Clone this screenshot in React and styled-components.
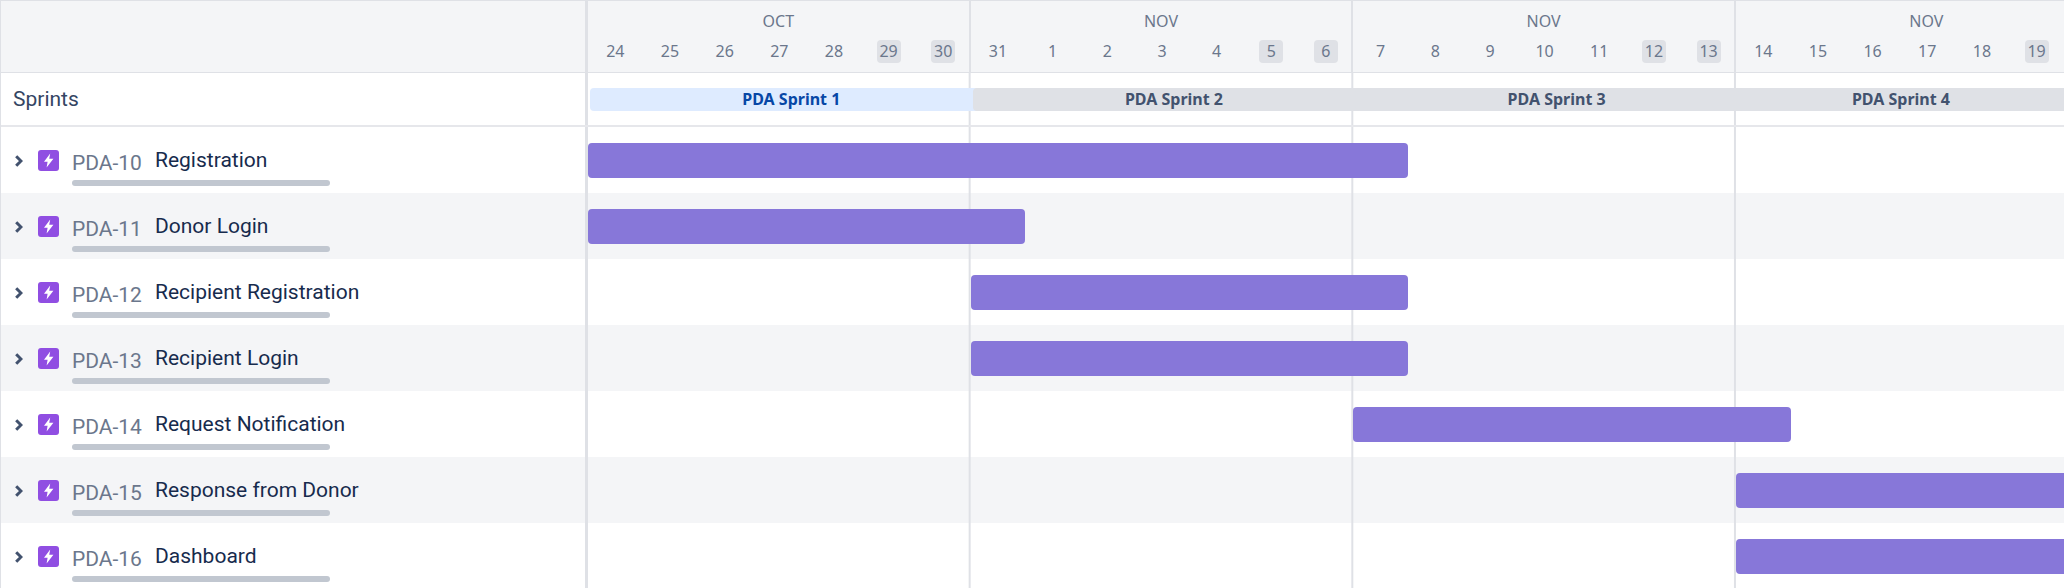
import React from 'react'
import styled, { createGlobalStyle } from 'styled-components'

const DAY = 54.6667
const WEEK = DAY * 7
const LINE = '#dfe1e6'

const months = [
  { name: 'OCT', days: [24, 25, 26, 27, 28, 29, 30] },
  { name: 'NOV', days: [31, 1, 2, 3, 4, 5, 6] },
  { name: 'NOV', days: [7, 8, 9, 10, 11, 12, 13] },
  { name: 'NOV', days: [14, 15, 16, 17, 18, 19] },
]

const sprints = ['PDA Sprint 1', 'PDA Sprint 2', 'PDA Sprint 3', 'PDA Sprint 4']

const issues = [
  { id: 'PDA-10', title: 'Registration', start: 0, days: 15 },
  { id: 'PDA-11', title: 'Donor Login', start: 0, days: 8 },
  { id: 'PDA-12', title: 'Recipient Registration', start: 7, days: 8 },
  { id: 'PDA-13', title: 'Recipient Login', start: 7, days: 8 },
  { id: 'PDA-14', title: 'Request Notification', start: 14, days: 8 },
  { id: 'PDA-15', title: 'Response from Donor', start: 21, days: 10 },
  { id: 'PDA-16', title: 'Dashboard', start: 21, days: 10 },
]

const Chevron = () => (
  <ChevronIcon viewBox="0 0 8 12" aria-hidden="true">
    <path d="M1.2 1.2 L6 6 L1.2 10.8" fill="none" stroke="#42526e" strokeWidth="3" />
  </ChevronIcon>
)

const EpicIcon = () => (
  <EpicBox>
    <svg viewBox="0 0 21 21" width="21" height="21" aria-hidden="true">
      <path d="M12.2 3.6 L6 11.8 H9.6 L8.6 17.4 L15.4 8.8 H11.2 Z" fill="#fff" />
    </svg>
  </EpicBox>
)

const App = () => {
  return (
    <Page>
      <GlobalStyle />
      <HeaderRow>
        <LeftCell />
        <Months>
          {months.map((month, i) => (
            <Month key={i}>
              <MonthName>{month.name}</MonthName>
              <Days>
                {month.days.map((day, d) => (
                  <Day key={day}>
                    <DayNumber $weekend={d > 4}>{day}</DayNumber>
                  </Day>
                ))}
              </Days>
            </Month>
          ))}
        </Months>
      </HeaderRow>

      <SprintRow>
        <SprintLabel>Sprints</SprintLabel>
        <SprintTrack>
          {sprints.map((sprint, i) => (
            <SprintPill key={sprint} $active={i === 0} $last={i === sprints.length - 1}>
              {sprint}
            </SprintPill>
          ))}
        </SprintTrack>
      </SprintRow>

      {issues.map((issue, i) => (
        <IssueRow key={issue.id} $striped={i % 2 === 1}>
          <IssueCell>
            <Chevron />
            <EpicIcon />
            <IssueBody>
              <IssueText>
                <IssueKey>{issue.id}</IssueKey>
                <IssueTitle>{issue.title}</IssueTitle>
              </IssueText>
              <Progress />
            </IssueBody>
          </IssueCell>
          <Track>
            <Bar $start={issue.start} $days={issue.days} />
          </Track>
        </IssueRow>
      ))}
    </Page>
  )
}

const GlobalStyle = createGlobalStyle`
  html, body {
    margin: 0;
    padding: 0;
    background: #fff;
  }
  * {
    box-sizing: border-box;
  }
`

const Page = styled.div`
  width: 2064px;
  height: 588px;
  overflow: hidden;
  border-top: 1px solid ${LINE};
  border-left: 1px solid ${LINE};
  font-family: Roboto, "Liberation Sans", sans-serif;
`

const HeaderRow = styled.div`
  display: grid;
  grid-template-columns: 587px 1fr;
  height: 72px;
  background: #f4f5f7;
  border-bottom: 1px solid ${LINE};
`

const LeftCell = styled.div`
  border-right: 3px solid ${LINE};
`

const Months = styled.div`
  display: flex;
  min-width: 0;
  overflow: hidden;
`

const Month = styled.div`
  flex: 0 0 ${WEEK}px;
  min-width: 0;
  height: 71px;
  border-right: 2px solid ${LINE};
`

const MonthName = styled.div`
  height: 31px;
  padding-top: 11px;
  text-align: center;
  font-family: "Noto Sans", sans-serif;
  font-size: 16px;
  line-height: 18px;
  color: #6b778c;
`

const Days = styled.div`
  display: flex;
  padding-top: 8px;
`

const Day = styled.div`
  flex: 0 0 ${DAY}px;
  display: flex;
  justify-content: center;
`

const DayNumber = styled.span`
  width: 24px;
  height: 23px;
  border-radius: 4px;
  background: ${(p) => (p.$weekend ? LINE : 'transparent')};
  text-align: center;
  font-family: "Noto Sans", sans-serif;
  font-size: 16px;
  line-height: 23px;
  color: #6b778c;
`

const weekLines = `
  background-image: linear-gradient(to right, transparent ${WEEK - 2}px, ${LINE} ${WEEK - 2}px);
  background-size: ${WEEK}px 100%;
`

const SprintRow = styled.div`
  display: grid;
  grid-template-columns: 587px 1fr;
  height: 54px;
  border-bottom: 2px solid #e6e7eb;
`

const SprintLabel = styled.div`
  display: flex;
  align-items: center;
  padding-left: 12px;
  border-right: 3px solid ${LINE};
  font-size: 21px;
  color: #344563;
`

const SprintTrack = styled.div`
  display: flex;
  min-width: 0;
  padding: 15px 0 0 2px;
  overflow: hidden;
  ${weekLines}
`

const SprintPill = styled.div`
  flex: ${(p) => (p.$last ? '1 0 0' : `0 0 ${WEEK + 20}px`)};
  height: 23px;
  margin-right: ${(p) => (p.$last ? '0' : '-20px')};
  border-radius: ${(p) => (p.$last ? '4px 0 0 4px' : '4px')};
  background: ${(p) => (p.$active ? '#deebff' : LINE)};
  color: ${(p) => (p.$active ? '#0747a6' : '#42526e')};
  text-align: center;
  font-family: "Noto Sans", sans-serif;
  font-size: 16px;
  font-weight: 700;
  line-height: 23px;
`

const IssueRow = styled.div`
  display: grid;
  grid-template-columns: 587px 1fr;
  height: 66px;
  background: ${(p) => (p.$striped ? '#f4f5f7' : '#fff')};
`

const IssueCell = styled.div`
  display: flex;
  align-items: flex-start;
  padding: 22px 0 0 14px;
  border-right: 3px solid ${LINE};
`

const ChevronIcon = styled.svg`
  flex: none;
  width: 8px;
  height: 12px;
  margin-top: 6px;
`

const EpicBox = styled.div`
  flex: none;
  width: 21px;
  height: 21px;
  margin: 1px 0 0 15px;
  border-radius: 3px;
  background: #904ee2;
`

const IssueBody = styled.div`
  width: 258px;
  margin-left: 13px;
`

const IssueText = styled.div`
  display: flex;
  align-items: flex-start;
  height: 31px;
  white-space: nowrap;
`

const IssueKey = styled.span`
  flex: none;
  width: 83px;
  margin-top: 2px;
  font-size: 21px;
  line-height: 24px;
  color: #6b778c;
`

const IssueTitle = styled.span`
  flex: none;
  margin-top: -1px;
  font-size: 21px;
  line-height: 24px;
  color: #172b4d;
`

const Progress = styled.div`
  height: 6px;
  border-radius: 3px;
  background: #c1c7d0;
`

const Track = styled.div`
  min-width: 0;
  padding-top: 16px;
  overflow: hidden;
  ${weekLines}
`

const Bar = styled.div`
  width: ${(p) => p.$days * DAY}px;
  height: 35px;
  margin-left: ${(p) => p.$start * DAY}px;
  border-radius: 4px;
  background: #8777d9;
`

export default App
